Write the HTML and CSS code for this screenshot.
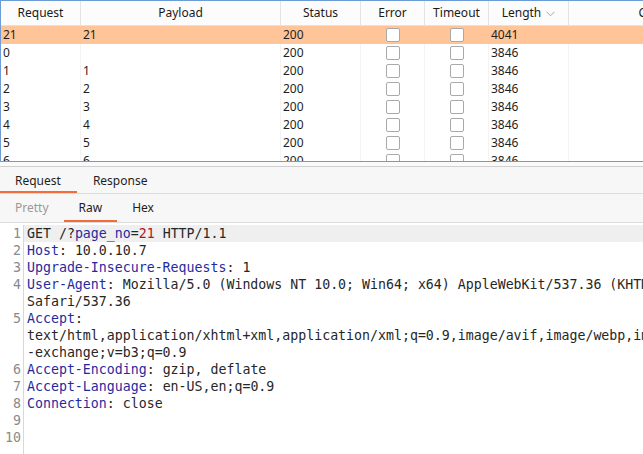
FILE: index.html
```html
<!DOCTYPE html>
<html>
<head>
<meta charset="utf-8">
<link rel="stylesheet" href="styles.css">
</head>
<body>
<div class="app">
  <div class="results">
    <div class="thead">
      <div class="th c-req">Request</div>
      <div class="th c-pay">Payload</div>
      <div class="th c-st">Status</div>
      <div class="th c-err">Error</div>
      <div class="th c-to">Timeout</div>
      <div class="th c-len">Length <svg class="chev" width="9" height="6" viewBox="0 0 9 6"><polyline points="0.5,0.8 4.5,4.8 8.5,0.8" fill="none" stroke="#a8a8a8" stroke-width="1"/></svg></div>
      <div class="th c-com">Comment</div>
    </div>
    <div class="tbody">
      <div class="tr sel"><div class="td c-req">21</div><div class="td c-pay">21</div><div class="td c-st">200</div><div class="td c-err"><span class="cb"></span></div><div class="td c-to"><span class="cb"></span></div><div class="td c-len">4041</div><div class="td c-com"></div></div>
      <div class="tr"><div class="td c-req">0</div><div class="td c-pay"></div><div class="td c-st">200</div><div class="td c-err"><span class="cb"></span></div><div class="td c-to"><span class="cb"></span></div><div class="td c-len">3846</div><div class="td c-com"></div></div>
      <div class="tr"><div class="td c-req">1</div><div class="td c-pay">1</div><div class="td c-st">200</div><div class="td c-err"><span class="cb"></span></div><div class="td c-to"><span class="cb"></span></div><div class="td c-len">3846</div><div class="td c-com"></div></div>
      <div class="tr"><div class="td c-req">2</div><div class="td c-pay">2</div><div class="td c-st">200</div><div class="td c-err"><span class="cb"></span></div><div class="td c-to"><span class="cb"></span></div><div class="td c-len">3846</div><div class="td c-com"></div></div>
      <div class="tr"><div class="td c-req">3</div><div class="td c-pay">3</div><div class="td c-st">200</div><div class="td c-err"><span class="cb"></span></div><div class="td c-to"><span class="cb"></span></div><div class="td c-len">3846</div><div class="td c-com"></div></div>
      <div class="tr"><div class="td c-req">4</div><div class="td c-pay">4</div><div class="td c-st">200</div><div class="td c-err"><span class="cb"></span></div><div class="td c-to"><span class="cb"></span></div><div class="td c-len">3846</div><div class="td c-com"></div></div>
      <div class="tr"><div class="td c-req">5</div><div class="td c-pay">5</div><div class="td c-st">200</div><div class="td c-err"><span class="cb"></span></div><div class="td c-to"><span class="cb"></span></div><div class="td c-len">3846</div><div class="td c-com"></div></div>
      <div class="tr"><div class="td c-req">6</div><div class="td c-pay">6</div><div class="td c-st">200</div><div class="td c-err"><span class="cb"></span></div><div class="td c-to"><span class="cb"></span></div><div class="td c-len">3846</div><div class="td c-com"></div></div>
    </div>
  </div>
  <div class="splitter"></div>
  <div class="tabs main-tabs">
    <div class="tab active">Request</div>
    <div class="tab">Response</div>
  </div>
  <div class="tabs sub-tabs">
    <div class="tab muted">Pretty</div>
    <div class="tab active">Raw</div>
    <div class="tab">Hex</div>
  </div>
  <div class="editor">
    <div class="ln cur"><span class="no">1</span><span class="code">GET /?<span class="k">page_no</span>=<span class="v">21</span> HTTP/1.1</span></div>
    <div class="ln"><span class="no">2</span><span class="code"><span class="k">Host</span>: 10.0.10.7</span></div>
    <div class="ln"><span class="no">3</span><span class="code"><span class="k">Upgrade-Insecure-Requests</span>: 1</span></div>
    <div class="ln"><span class="no">4</span><span class="code"><span class="k">User-Agent</span>: Mozilla/5.0 (Windows NT 10.0; Win64; x64) AppleWebKit/537.36 (KHTML, like Gecko) Chrome/96.0.4664.45 </span></div>
    <div class="ln"><span class="no"></span><span class="code">Safari/537.36</span></div>
    <div class="ln"><span class="no">5</span><span class="code"><span class="k">Accept</span>:</span></div>
    <div class="ln"><span class="no"></span><span class="code">text/html,application/xhtml+xml,application/xml;q=0.9,image/avif,image/webp,image/apng,*/*;q=0.8,application/signed</span></div>
    <div class="ln"><span class="no"></span><span class="code">-exchange;v=b3;q=0.9</span></div>
    <div class="ln"><span class="no">6</span><span class="code"><span class="k">Accept-Encoding</span>: gzip, deflate</span></div>
    <div class="ln"><span class="no">7</span><span class="code"><span class="k">Accept-Language</span>: en-US,en;q=0.9</span></div>
    <div class="ln"><span class="no">8</span><span class="code"><span class="k">Connection</span>: close</span></div>
    <div class="ln"><span class="no">9</span><span class="code"></span></div>
    <div class="ln"><span class="no">10</span><span class="code"></span></div>
    <div class="ln"><span class="no"></span><span class="code"></span></div>
  </div>
</div>
</body>
</html>
```
FILE: styles.css
```css
* { box-sizing: border-box; }
html, body { margin: 0; padding: 0; background: #ffffff; }
body {
  font-family: "Noto Sans", "DejaVu Sans", sans-serif;
  font-size: 12px;
  color: #1e1e1e;
  width: 643px;
  height: 454px;
  overflow: hidden;
}
.app { width: 643px; height: 454px; overflow: hidden; display: flex; flex-direction: column; }

.results {
  border-top: 1px solid #6d9bd6;
  border-left: 1px solid #6d9bd6;
  border-bottom: 1px solid #6d9bd6;
  height: 162px;
  width: 900px;
  overflow: hidden;
  flex: none;
}
.thead, .tr {
  display: grid;
  grid-template-columns: 80px 200px 80px 64px 64px 80px 196px;
}
.thead {
  height: 25px;
  border-bottom: 1px solid #e2e2e2;
  background: #fcfcfc;
}
.th {
  border-right: 1px solid #e4e4e4;
  display: flex;
  align-items: center;
  justify-content: center;
  gap: 5px;
  line-height: 24px;
  color: #1a1a1a;
}
.chev { margin-top: 1px; }
.tbody { height: 135px; overflow: hidden; }
.tr { height: 18px; }
.td {
  border-right: 1px solid #f3f3f3;
  padding-left: 2px;
  line-height: 18px;
  height: 18px;
  white-space: nowrap;
  overflow: hidden;
}
.tr.sel { background: #ffc599; }
.tr.sel .td { border-right-color: transparent; }
.c-err, .c-to { display: flex; align-items: center; justify-content: center; padding-left: 0; }
.cb {
  width: 14px; height: 14px;
  border: 1px solid #a9a9a9;
  border-radius: 2px;
  background: #ffffff;
  display: block;
  margin-left: 1px;
}

.splitter {
  height: 5px;
  flex: none;
  border-bottom: 1px solid #cfcfcf;
  background: #fafafa;
}
.tabs {
  display: flex;
  background: #f7f7f7;
  border-bottom: 1px solid #dcdcdc;
  flex: none;
}
.main-tabs { height: 27px; }
.sub-tabs { height: 29px; }
.tab {
  padding: 0 15px;
  display: flex;
  align-items: center;
  color: #1e1e1e;
  border-bottom: 2px solid transparent;
}
.main-tabs .tab { padding: 3px 16px 0; }
.main-tabs .tab:first-child { padding-left: 15px; }
.tab.active { border-bottom-color: #f26b3a; }
.tab.muted { color: #9a9a9a; }
.sub-tabs .tab { padding-top: 1px; }

.editor {
  flex: 1;
  background: #ffffff;
  padding-top: 2px;
  font-family: "DejaVu Sans Mono", monospace;
  font-size: 13.25px;
  overflow: hidden;
}
.ln {
  display: flex;
  height: 17px;
  line-height: 17px;
  white-space: pre;
}
.no {
  flex: none;
  width: 24px;
  text-align: right;
  padding-right: 2px;
  color: #8a8a8a;
  border-right: 1px solid #d8d8d8;
  background: #ffffff;
}
.code {
  padding-left: 3px;
  color: #262626;
  flex: 1;
}
.ln.cur .code { background: #efefef; }
.k { color: #1f2b9e; }
.v { color: #b3141c; }
```
